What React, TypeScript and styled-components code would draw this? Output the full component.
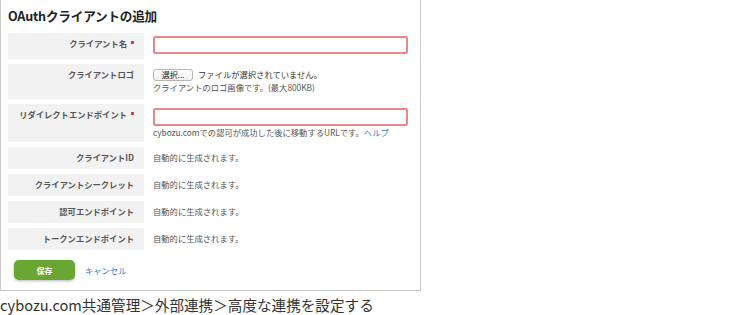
import React from "react";
import styled, { createGlobalStyle } from "styled-components";

const Global = createGlobalStyle`
  html, body { margin: 0; padding: 0; background: #fff; }
  body { font-family: "Noto Sans CJK JP", "Noto Sans", sans-serif; color: #333; }
  * { box-sizing: border-box; }
`;

const Panel = styled.div`
  width: 421px;
  height: 291px;
  border: 1px solid #c9c9c9;
  border-top: none;
  padding: 0 12px 0 7px;
  display: flex;
  flex-direction: column;
`;

const Title = styled.h1`
  margin: 0;
  padding: 7px 0 0 0;
  height: 33px;
  font-size: 12.6px;
  line-height: 18px;
  font-weight: 700;
  color: #222;
  letter-spacing: -0.2px;
`;

const Rows = styled.div`
  display: flex;
  flex-direction: column;
  gap: 5px;
`;

const Row = styled.div<{ $h: number }>`
  display: flex;
  height: ${(p) => p.$h}px;
  gap: 9px;
`;

const Label = styled.div`
  width: 136px;
  flex: none;
  background: #f2f2f2;
  text-align: right;
  padding: 4px 10px 0 0;
  font-size: 8.3px;
  line-height: 13px;
  font-weight: 700;
  color: #555;
`;

const Req = styled.span`
  display: inline-block;
  width: 3px;
  height: 3px;
  background: #e0393e;
  margin-left: 4px;
  vertical-align: 3px;
`;

const Value = styled.div<{ $pt?: number }>`
  flex: 1;
  padding-top: ${(p) => p.$pt ?? 4}px;
  font-size: 8.3px;
  line-height: 13px;
  color: #555;
`;

const TextInput = styled.div`
  height: 18px;
  border: 2px solid #f08585;
  border-radius: 2px;
  background: #fff;
`;

const FileLine = styled.div`
  display: flex;
  align-items: center;
  gap: 5px;
  color: #333;
`;

const FileButton = styled.span`
  display: inline-flex;
  align-items: center;
  justify-content: center;
  width: 40px;
  height: 12px;
  border: 1px solid #b5b5b5;
  border-radius: 3px;
  background: linear-gradient(#fff, #f0f0f0);
  font-size: 8px;
  color: #222;
`;

const Note = styled.div`
  color: #555;
`;

const Help = styled.a`
  color: #2f7bd3;
  text-decoration: none;
`;

const Actions = styled.div`
  display: flex;
  align-items: center;
  gap: 10px;
  padding: 10px 0 0 6px;
`;

const SaveButton = styled.button`
  width: 61px;
  height: 20px;
  border: none;
  border-radius: 5px;
  background: #6aa633;
  box-shadow: 0 1px 3px rgba(0, 0, 0, 0.3);
  color: #fff;
  font-family: inherit;
  font-size: 8px;
  font-weight: 700;
  padding: 0;
`;

const CancelLink = styled.a`
  color: #2f7bd3;
  font-size: 8.3px;
  text-decoration: none;
`;

const Caption = styled.div`
  padding-top: 4px;
  font-size: 14.6px;
  line-height: 20px;
  color: #333;
`;

export default function App() {
  return (
    <>
      <Global />
      <Panel>
        <Title>OAuthクライアントの追加</Title>
        <Rows>
          <Row $h={26}>
            <Label>
              クライアント名<Req aria-label="必須" />
            </Label>
            <Value $pt={3}>
              <TextInput />
            </Value>
          </Row>
          <Row $h={35}>
            <Label>クライアントロゴ</Label>
            <Value $pt={4}>
              <FileLine>
                <FileButton>選択...</FileButton>
                <span>ファイルが選択されていません。</span>
              </FileLine>
              <Note>クライアントのロゴ画像です。(最大800KB)</Note>
            </Value>
          </Row>
          <Row $h={38}>
            <Label>
              リダイレクトエンドポイント<Req aria-label="必須" />
            </Label>
            <Value $pt={4}>
              <TextInput />
              <Note>
                cybozu.comでの認可が成功した後に移動するURLです。<Help>ヘルプ</Help>
              </Note>
            </Value>
          </Row>
          <Row $h={22}>
            <Label>クライアントID</Label>
            <Value>自動的に生成されます。</Value>
          </Row>
          <Row $h={22}>
            <Label>クライアントシークレット</Label>
            <Value>自動的に生成されます。</Value>
          </Row>
          <Row $h={22}>
            <Label>認可エンドポイント</Label>
            <Value>自動的に生成されます。</Value>
          </Row>
          <Row $h={22}>
            <Label>トークンエンドポイント</Label>
            <Value>自動的に生成されます。</Value>
          </Row>
        </Rows>
        <Actions>
          <SaveButton>保存</SaveButton>
          <CancelLink>キャンセル</CancelLink>
        </Actions>
      </Panel>
      <Caption>cybozu.com共通管理＞外部連携＞高度な連携を設定する</Caption>
    </>
  );
}
